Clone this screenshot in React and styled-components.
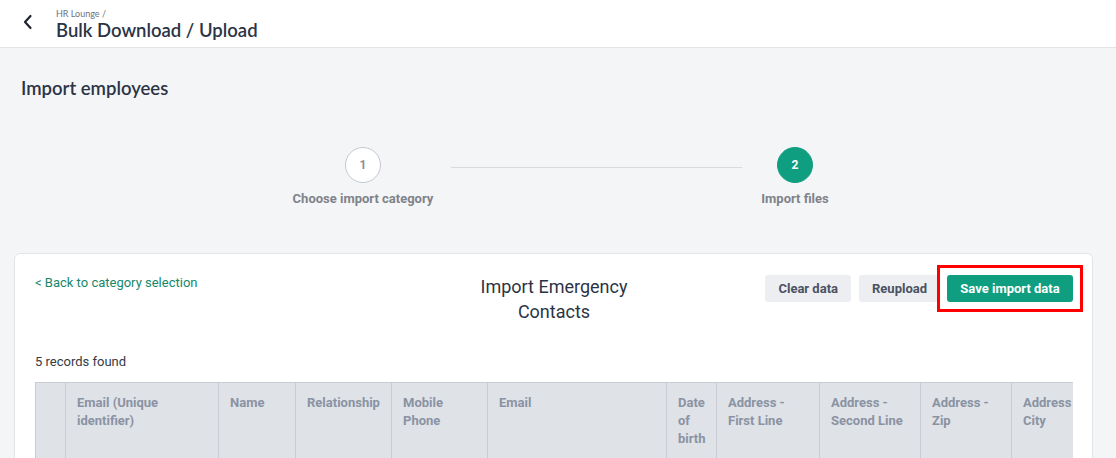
import React from 'react';
import styled, { createGlobalStyle } from 'styled-components';

const GlobalStyle = createGlobalStyle`
  html, body {
    margin: 0;
    padding: 0;
    background: #f4f5f7;
    font-family: Roboto, "Liberation Sans", sans-serif;
    overflow: hidden;
  }
  * { box-sizing: border-box; }
`;

const columns = [
  { label: '', width: 30 },
  { label: 'Email (Unique identifier)', width: 153 },
  { label: 'Name', width: 77 },
  { label: 'Relationship', width: 96 },
  { label: 'Mobile Phone', width: 96 },
  { label: 'Email', width: 179 },
  { label: 'Date of birth', width: 50 },
  { label: 'Address - First Line', width: 103 },
  { label: 'Address - Second Line', width: 101 },
  { label: 'Address - Zip', width: 91 },
  { label: 'Address City', width: 66 },
];

const App = () => {
  return (
    <>
      <GlobalStyle />
      <Header>
        <BackButton aria-label="back">
          <svg width="12" height="16" viewBox="0 0 12 16" fill="none">
            <path d="M8.5 2L3 8l5.5 6" stroke="#1f2430" strokeWidth="2.2" strokeLinecap="round" strokeLinejoin="round" />
          </svg>
        </BackButton>
        <HeaderTitles>
          <Crumb>HR Lounge /</Crumb>
          <PageTitle>Bulk Download / Upload</PageTitle>
        </HeaderTitles>
      </Header>

      <Main>
        <SectionTitle>Import employees</SectionTitle>

        <Stepper>
          <Step $width={176}>
            <Circle>1</Circle>
            <StepLabel>Choose import category</StepLabel>
          </Step>
          <StepLine />
          <Step $width={106}>
            <Circle $active>2</Circle>
            <StepLabel>Import files</StepLabel>
          </Step>
        </Stepper>

        <Card>
          <TopRow>
            <BackLink href="#">&lt; Back to category selection</BackLink>
            <CardTitle>Import Emergency Contacts</CardTitle>
            <Actions>
              <Button>Clear data</Button>
              <Button>Reupload</Button>
              <Button $primary $highlight>Save import data</Button>
            </Actions>
          </TopRow>

          <Records>5 records found</Records>

          <TableWrap>
            <Table>
              <colgroup>
                {columns.map((c, i) => (
                  <col key={i} style={{ width: c.width }} />
                ))}
              </colgroup>
              <thead>
                <tr>
                  {columns.map((c, i) => (
                    <Th key={i}>{c.label}</Th>
                  ))}
                </tr>
              </thead>
              <tbody>
                <tr>
                  {columns.map((c, i) => (
                    <Td key={i}>&nbsp;</Td>
                  ))}
                </tr>
              </tbody>
            </Table>
          </TableWrap>
        </Card>
      </Main>
    </>
  );
};

export default App;

const Header = styled.header`
  height: 48px;
  background: #ffffff;
  border-bottom: 1px solid #e2e4e8;
  display: flex;
  align-items: center;
  padding-left: 20px;
`;

const BackButton = styled.span`
  width: 16px;
  height: 18px;
  display: flex;
  align-items: center;
  justify-content: center;
  margin-right: 20px;
  margin-top: -4px;
`;

const HeaderTitles = styled.div`
  display: flex;
  flex-direction: column;
  margin-top: 1px;
`;

const Crumb = styled.span`
  font-family: Lato, "Liberation Sans", sans-serif;
  font-size: 9px;
  color: #6b7280;
  line-height: 11px;
`;

const PageTitle = styled.span`
  font-family: Lato, "Liberation Sans", sans-serif;
  font-size: 18.5px;
  font-weight: 600;
  color: #2b3445;
  line-height: 22px;
`;

const Main = styled.main`
  padding: 28px 23px 0 14px;
`;

const SectionTitle = styled.h1`
  margin: 0 0 0 7px;
  font-family: Lato, "Liberation Sans", sans-serif;
  font-size: 18.5px;
  font-weight: 600;
  color: #2b3445;
  line-height: 24px;
`;

const Stepper = styled.div`
  display: flex;
  align-items: flex-start;
  padding-left: 261px;
  margin-top: 47px;
  height: 106px;
`;

const Step = styled.div`
  width: ${(p) => p.$width}px;
  display: flex;
  flex-direction: column;
  align-items: center;
`;

const Circle = styled.div`
  width: 36px;
  height: 36px;
  border-radius: 50%;
  display: flex;
  align-items: center;
  justify-content: center;
  font-size: 12px;
  font-weight: 700;
  background: ${(p) => (p.$active ? '#0f9e7f' : '#ffffff')};
  color: ${(p) => (p.$active ? '#ffffff' : '#8b8f96')};
  border: 1px solid ${(p) => (p.$active ? '#0f9e7f' : '#c4c7cc')};
`;

const StepLabel = styled.span`
  margin-top: 8px;
  font-size: 13px;
  font-weight: 700;
  color: #7f8389;
  white-space: nowrap;
`;

const StepLine = styled.div`
  width: 291px;
  height: 1px;
  background: #d7dade;
  margin-top: 20px;
`;

const Card = styled.section`
  background: #ffffff;
  border: 1px solid #e2e4e8;
  border-radius: 6px;
  padding: 20px 19px 0 20px;
  height: 220px;
`;

const TopRow = styled.div`
  display: grid;
  grid-template-columns: 1fr 180px 1fr;
  align-items: start;
`;

const BackLink = styled.a`
  color: #16876c;
  font-size: 13px;
  line-height: 18px;
  text-decoration: none;
`;

const CardTitle = styled.h2`
  margin: 0;
  text-align: center;
  font-size: 18px;
  font-weight: 400;
  line-height: 25px;
  color: #2b3445;
`;

const Actions = styled.div`
  display: flex;
  justify-content: flex-end;
  gap: 8px;
  padding-top: 1px;
`;

const Button = styled.button`
  position: relative;
  height: 27px;
  padding: 0 13px;
  border: none;
  border-radius: 3px;
  font-family: Roboto, "Liberation Sans", sans-serif;
  font-size: 13px;
  font-weight: 700;
  cursor: pointer;
  background: ${(p) => (p.$primary ? '#0f9e7f' : '#eceef1')};
  color: ${(p) => (p.$primary ? '#ffffff' : '#4b5262')};
  ${(p) => p.$primary && 'width: 126px; margin-left: -1px;'}
  ${(p) =>
    p.$highlight &&
    `&::after {
      content: '';
      position: absolute;
      inset: -10px;
      border: 3px solid #ff0000;
    }`}
`;

const Records = styled.p`
  margin: 29px 0 0;
  font-size: 13px;
  line-height: 18px;
  color: #333a44;
`;

const TableWrap = styled.div`
  margin-top: 11px;
  overflow: hidden;
`;

const Table = styled.table`
  border-collapse: collapse;
  table-layout: fixed;
  width: 1042px;
`;

const Th = styled.th`
  background: #dfe2e7;
  border: 1px solid #c9ccd2;
  text-align: left;
  vertical-align: top;
  padding: 11px 10px 16px 11px;
  font-size: 13px;
  font-weight: 700;
  line-height: 18px;
  color: #8a93a3;
  height: 73px;
`;

const Td = styled.td`
  border: 1px solid #c9ccd2;
  height: 40px;
  font-size: 13px;
`;
